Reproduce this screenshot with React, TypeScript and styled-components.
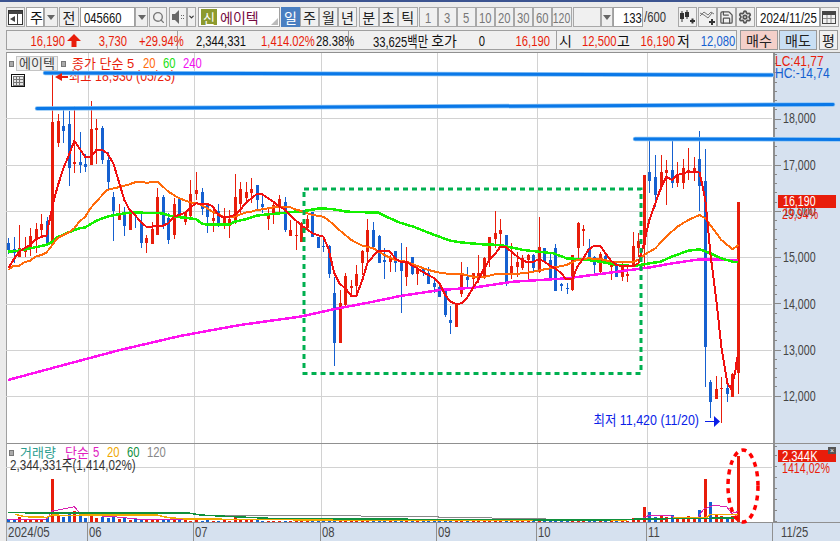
import styled, { createGlobalStyle } from 'styled-components'
import { Search, Save, Settings, ChevronDown } from 'lucide-react'

const FONT = `"Liberation Sans", "Noto Sans CJK KR", sans-serif`

const Global = createGlobalStyle`
  html, body { margin: 0; padding: 0; overflow: hidden; background: #ebebeb; }
  * { box-sizing: border-box; }
`

const Shell = styled.div`
  width: 840px;
  height: 541px;
  overflow: hidden;
  display: flex;
  flex-direction: column;
  border-top: 2px solid #3c5490;
  font-family: ${FONT};
  background: #ebebeb;
`

const Toolbar = styled.div`
  display: flex;
  height: 20px;
  margin: 5px 0 0 6px;
`

const Btn = styled.div<{ $w: number; $ml?: number; $active?: boolean; $muted?: boolean }>`
  width: ${p => p.$w}px;
  margin-left: ${p => p.$ml ?? 0}px;
  flex: none;
  display: flex;
  align-items: center;
  justify-content: center;
  font-size: 14px;
  border: 1px solid ${p => (p.$active ? '#4a7fc1' : '#a8a8a8')};
  background: ${p => (p.$active ? '#4a7fc1' : '#f0f0f0')};
  color: ${p => (p.$active ? '#fff' : p.$muted ? '#777' : '#222')};
`

const Field = styled.div<{ $w: number; $ml?: number }>`
  width: ${p => p.$w}px;
  margin-left: ${p => p.$ml ?? 0}px;
  flex: none;
  display: flex;
  align-items: center;
  padding: 0 3px;
  font-size: 14px;
  color: #111;
  background: #fff;
  border: 1px solid #a0a0a0;
`

// the reference font is a narrow bitmap face, no installed family has its widths
const Squeeze = styled.span<{ $sx?: number; $o?: string; $fs?: number }>`
  display: inline-block;
  flex: none;
  white-space: nowrap;
  font-size: ${p => p.$fs ?? 15}px;
  transform: scaleX(${p => p.$sx ?? 0.75});
  transform-origin: ${p => p.$o ?? 'left'} center;
`

const Caret = styled.div<{ $w: number }>`
  width: ${p => p.$w}px;
  flex: none;
  display: flex;
  align-items: center;
  justify-content: center;
  background: #efefef;
  border: 1px solid #a8a8a8;
  &::after {
    content: '';
    border-left: 4px solid transparent;
    border-right: 4px solid transparent;
    border-top: 5px solid #666;
  }
`

const ShinBadge = styled.span`
  width: 16px;
  height: 16px;
  margin-left: -1px;
  flex: none;
  display: flex;
  align-items: center;
  justify-content: center;
  background: #8c9a2e;
  color: #fff;
  font-size: 13px;
`

const NameText = styled.span`
  margin-left: 3px;
  font-size: 14px;
  color: #74093f;
`

const Corner = styled.span`
  margin-left: auto;
  margin-right: -2px;
  align-self: flex-end;
  margin-bottom: 1px;
  border-left: 7px solid transparent;
  border-bottom: 7px solid #bbb;
`

const Total = styled.span`
  width: 26px;
  margin-left: 1px;
  flex: none;
  align-self: center;
  color: #333;
`

const InfoBar = styled.div`
  display: flex;
  height: 20px;
  margin: 3px 0 2px 6px;
`

const Group = styled.div<{ $w: number; $first?: boolean }>`
  width: ${p => p.$w}px;
  flex: none;
  display: flex;
  align-items: center;
  background: #f0f0f0;
  border: 1px solid #a0a0a0;
  border-left-width: ${p => (p.$first ? 1 : 0)}px;
`

const Cell = styled.span<{ $w: number; $c?: string; $wide?: boolean }>`
  width: ${p => p.$w}px;
  flex: none;
  text-align: right;
  white-space: nowrap;
  font-size: ${p => (p.$wide ? 14 : 15)}px;
  color: ${p => p.$c ?? '#111'};
  transform: scaleX(${p => (p.$wide ? 1 : 0.75)});
  transform-origin: right center;
`

const UpArrow = styled.svg`
  margin-left: 2px;
  flex: none;
`

const TradeBtn = styled.div<{ $w: number; $ml: number; $bg: string }>`
  width: ${p => p.$w}px;
  margin-left: ${p => p.$ml}px;
  flex: none;
  display: flex;
  align-items: center;
  justify-content: center;
  font-size: 14px;
  color: #222;
  background: ${p => p.$bg};
  border: 1px solid #999;
`

const ChartFrame = styled.div`
  flex: 1;
  margin-left: 6px;
  display: flex;
  flex-direction: column;
  background: #fff;
  border-top: 1px solid #909090;
  border-left: 1px solid #a0a0a0;
`

const Pane = styled.div<{ $h: number }>`
  height: ${p => p.$h}px;
  flex: none;
  position: relative;
  display: flex;
  border-bottom: 1px solid #909090;
`

const Plot = styled.div`
  flex: 1;
`

const PriceAxis = styled.div`
  width: 67px;
  flex: none;
  background: #d6e1ef;
  border-left: 2px solid #909090;
`

const ChartSvg = styled.svg`
  position: absolute;
  left: -1px;
  top: 0;
  overflow: visible;
  text {
    font-family: ${FONT};
  }
`

const Label = styled.text<{ $sx?: number; $end?: boolean; $fs?: number }>`
  font-size: ${p => p.$fs ?? 15}px;
  transform-box: fill-box;
  transform-origin: ${p => (p.$end ? 'right' : 'left')} center;
  transform: scaleX(${p => p.$sx ?? 0.71});
`

const Legend = styled.div<{ $top: number }>`
  position: absolute;
  left: 2px;
  top: ${p => p.$top}px;
  display: flex;
  align-items: center;
  font-size: 13px;
  line-height: 16px;
`

const Dot = styled.span`
  width: 5px;
  height: 6px;
  flex: none;
  background: #aaa;
  border: 1px solid #777;
`

const NameChip = styled.span`
  width: 42px;
  height: 15px;
  margin: 0 3px 0 2px;
  display: flex;
  align-items: center;
  justify-content: center;
  background: #efefef;
  border: 1px solid #c4c4c4;
  color: #444;
`

const LegendText = styled.span<{ $c: string; $ml: number; $w: number }>`
  width: ${p => p.$w}px;
  margin-left: ${p => p.$ml}px;
  flex: none;
  color: ${p => p.$c};
  white-space: nowrap;
`

const VolumeInfo = styled.div`
  position: absolute;
  left: 3px;
  top: 13px;
  line-height: 16px;
  color: #333;
`

const CloseBox = styled.div`
  position: absolute;
  right: 4px;
  top: 3px;
  width: 8px;
  height: 7px;
  background: #555;
  color: #fff;
  font-size: 7px;
  line-height: 7px;
  text-align: center;
`

const TimeAxis = styled.div`
  flex: 1;
  display: flex;
  background: #d6e1ef;
`

const TimeCell = styled.div<{ $w: number }>`
  width: ${p => p.$w}px;
  flex: none;
  padding-left: 1px;
  line-height: 18px;
  color: #444;
  border-right: 1px solid #909090;
  &:last-child { border-right: none; padding-left: 8px; }
`

const R = 1
const B = 0
type Raw = [number, number, number, number, number]

// body top, body bottom, wick top, wick bottom, read off the chart at 3x
const seg1: Raw[] = [
  [B,430,450,415,462],[B,448,458,410,490],[R,445,470,375,465],[R,440,455,410,470],[R,408,440,385,468],
  [R,388,418,368,460],[R,372,390,342,415],[B,363,432,352,432],[R,65,425,-75,435],[R,63,130,42,140],
  [B,78,93,20,130],[B,72,205,33,258],[R,185,192,18,218],[B,186,195,96,218],[B,192,202,162,215],
  [R,87,195,3,195],[R,84,90,57,192],[B,84,180,78,192],[B,180,245,155,272],[B,292,332,275,422],
  [R,345,360,312,360],[B,345,378,320,408],[R,335,390,330,390],[B,345,348,335,385],[B,370,428,337,445],
  [R,413,430,405,458],[R,388,432,365,432],[R,290,405,265,405],[B,290,375,285,388],[B,353,420,340,432],
  [R,312,405,295,418],[B,295,350,292,352],[R,335,365,335,375],[R,282,348,240,360],[R,270,282,217,300],
  [B,276,327,265,345],[B,315,350,308,398],[R,354,364,325,395],[B,333,378,312,382],[R,350,375,325,388],
  [R,356,378,330,415],[R,292,362,222,372],[R,268,312,245,345],[R,276,294,245,310],[R,267,280,235,310],
  [B,255,300,255,328],[B,312,322,285,338],[R,342,356,320,390],[R,315,345,310,372],[R,297,318,285,340],
  [B,306,390,292,395],[R,390,408,360,408],[R,405,407,362,450],
]
const seg2: Raw[] = [
  [R,130,185,125,185],[R,118,145,105,150],[B,97,170,95,172],[B,172,205,172,205],[B,198,202,178,215],
  [B,197,282,195,293],[B,340,490,290,557],[R,370,488,330,488],[R,288,375,278,378],[R,319,323,300,350],
  [R,283,318,255,345],[R,213,248,210,285],[R,150,215,118,250],[B,150,202,127,205],[B,168,248,165,250],
  [B,240,245,205,297],[R,230,245,225,275],[B,213,248,212,275],[B,240,272,190,398],[R,245,290,202,318],
  [B,232,282,232,285],[R,265,282,255,315],[B,265,280,262,288],[B,278,312,262,312],[B,310,320,295,338],
  [B,320,352,318,352],[B,325,404,323,412],[B,420,428,378,462],[R,372,440,372,440],[R,278,342,245,352],
  [B,292,300,262,325],[R,280,298,280,325],[R,280,298,225,310],[R,235,295,230,298],[R,172,238,172,260],
  [R,160,178,93,205],[R,150,162,118,205],[B,165,305,165,318],[R,258,280,190,297],[R,246,262,215,290],
  [R,235,265,225,270],[R,225,240,222,297],[B,225,265,222,278],[R,202,275,112,280],[B,205,245,205,250],
  [B,240,295,222,300],[B,205,332,192,332],[B,313,318,310,332],[B,324,326,310,342],[R,225,330,225,332],
  [R,128,205,125,240],[R,148,152,135,198],[B,205,235,178,240],[B,232,255,228,285],[R,222,275,215,278],
  [B,228,250,225,252],[R,250,260,240,300],[B,252,290,250,292],[R,255,290,242,302],[R,282,287,258,305],
  [R,198,260,155,262],[R,183,205,160,230],
]
const seg3: Raw[] = [
  [R,165,375,165,440],[B,155,182,62,218],[B,170,225,105,260],[R,155,200,105,210],[R,150,158,120,255],
  [B,150,188,55,205],[R,163,188,125,200],[R,145,190,118,208],[R,150,155,85,180],[R,145,152,110,182],
  [B,117,197,33,272],[B,183,680,88,802],[B,787,845,780,894],[R,808,838,768,838],[R,803,806,770,909],
  [B,803,822,790,845],[R,762,830,760,830],[R,246,760,246,822],
]

const toPage = (oy: number) => (r: Raw): Raw => [r[0], oy + r[1] / 3, oy + r[2] / 3, oy + r[3] / 3, oy + r[4] / 3]
const candles = [...seg1.map(toPage(100)), ...seg2.map(toPage(180)), ...seg3.map(toPage(120))]

const candleX = (i: number) => 8.5 + i * 5.53
const RED = '#e81d0b'
const BLUE = '#1560d0'

const zoomed = (ox: number, oy: number, list: number[][]) =>
  list.map(([x, y]) => `${ox + x / 3},${oy + y / 3}`).join(' ')

const ma5 = [
  zoomed(0, 100, [[25,505],[40,480],[57,455],[73,445],[90,435],[106,420],[124,410],[139,408],[157,320],[172,262],[190,205],[205,170],[223,122],[238,145],[256,172],[271,172],[289,150],[307,150],[322,160],[340,190],[355,240],[373,300],[388,328],[405,345],[421,365],[439,380],[454,380],[472,378],[487,378],[505,370],[521,350],[538,345],[556,338],[571,322],[589,310],[604,312],[622,312],[637,318],[655,345],[670,352],[688,350],[704,345],[721,330],[736,310],[754,295],[769,283],[787,283],[805,295],[820,305],[838,320],[853,328],[871,345],[886,360]]),
  zoomed(300, 180, [[3,135],[37,160],[52,165],[70,170],[85,205],[103,280],[118,310],[136,325],[154,348],[169,348],[187,300],[202,250],[220,228],[235,212],[253,212],[268,213],[286,235],[301,245],[319,245],[334,255],[352,265],[367,275],[385,285],[403,295],[418,310],[436,345],[451,365],[469,372],[484,370],[502,352],[518,325],[535,300],[550,270],[568,240],[583,225],[601,200],[616,200],[634,215],[652,230],[667,240],[685,248],[700,245],[718,238],[733,245],[751,258],[766,265],[784,280],[799,298],[817,298],[832,260],[850,235],[865,210],[883,197],[901,197],[916,220],[934,243],[949,255],[967,258],[982,258],[1000,258],[1015,250]]),
  zoomed(620, 120, [[72,370],[88,300],[106,250],[122,205],[139,170],[155,180],[172,165],[190,160],[205,155],[222,155],[239,158],[256,240],[262,300],[271,400],[289,540],[304,680],[322,790],[332,805],[345,760],[352,710]]),
].join(' ')

const ma20 = [
  zoomed(0, 100, [[25,510],[40,497],[57,497],[73,487],[90,482],[106,470],[124,465],[139,458],[157,435],[172,415],[190,405],[205,398],[223,385],[238,365],[256,350],[271,325],[289,305],[307,285],[322,270],[340,265],[355,262],[373,257],[388,253],[405,247],[421,245],[439,248],[454,247],[472,245],[487,258],[505,275],[521,285],[538,295],[556,302],[571,307],[589,310],[604,315],[622,325],[637,335],[655,342],[670,350],[688,352],[704,350],[721,343],[736,338],[754,335],[769,330],[787,328],[805,325],[820,322],[838,320],[853,320],[871,322],[886,328]]),
  zoomed(300, 180, [[0,92],[37,105],[70,110],[85,120],[118,150],[154,180],[187,197],[220,205],[253,225],[286,240],[319,245],[352,258],[385,270],[418,278],[451,282],[484,282],[520,290],[550,292],[583,283],[634,283],[667,280],[700,275],[733,268],[766,262],[799,255],[832,240],[865,235],[901,237],[934,245],[967,245],[1000,245],[1020,238]]),
  zoomed(620, 120, [[72,405],[106,385],[139,350],[172,320],[205,300],[239,285],[256,295],[271,315],[304,360],[338,388],[355,375]]),
].join(' ')

const ma60 = [
  zoomed(0, 100, [[25,455],[57,452],[90,445],[124,438],[139,435],[157,425],[172,412],[205,397],[238,385],[256,382],[289,362],[322,350],[355,343],[388,338],[421,338],[487,340],[520,350],[556,353],[589,358],[604,370],[622,374],[688,374],[704,365],[736,358],[769,347],[805,343],[838,340],[886,335]]),
  zoomed(300, 180, [[0,95],[30,90],[60,85],[95,87],[140,95],[235,98],[270,115],[300,128],[340,140],[385,158],[450,182],[490,188],[550,193],[600,195],[670,210],[760,220],[800,235],[850,238],[900,245],[950,255],[1000,258]]),
  zoomed(620, 120, [[88,430],[122,425],[155,410],[205,392],[239,388],[271,400],[304,415],[338,425],[355,427]]),
].join(' ')

const ma240 = [
  '8,380 60,366 120,350 180,336 240,325',
  zoomed(300, 180, [[0,410],[100,388],[220,365],[300,348],[420,330],[520,323],[640,305],[800,295],[900,282],[1050,262]]),
  zoomed(620, 120, [[100,440],[170,428],[239,418],[355,420]]),
].join(' ')

const volumes = [
  3,3,5,3,3,3,3,5,43,7,5,9,11,6,4,8,4,5,4,6,3,4,2,4,2,2,2,2,3,2,3,
  2,2,1,2,1,2,1,1,2,1,5,3,2,2,2,1,1,1,1,1,1,1,1,1,1,1,1,2,1,4,
  2,2,1,3,1,1,1,1,1,2,1,1,2,1,1,2,1,1,1,2,1,1,1,2,1,1,2,1,1,1,2,1,1,2,1,1,1,2,1,1,2,1,1,1,1,2,1,1,1,2,1,1,4,2,
  15,10,5,6,5,7,3,4,6,4,12,43,20,7,6,4,6,66,
]
const volumeRed = [126]

const gridX = [88, 194, 321, 437, 537, 647]
const gridY = [118, 165, 211, 257, 304, 350, 396]
const priceLabels = ['18,000', '17,000', '16,000', '15,000', '14,000', '13,000', '12,000']
const priceTicks = Array.from({ length: 40 }, (_, k) => k)

const TableIcon = () => (
  <g shapeRendering="crispEdges" fill="none">
    <rect x="11.5" y="74.5" width="13" height="12" stroke="#111" />
    <rect x="13" y="76" width="10" height="9" fill="#e6e6e6" stroke="#777" />
    <path d="M16.5 76v9M19.5 76v9M13 79.5h10M13 82.5h10" stroke="#777" />
  </g>
)

const MainChart = () => (
  <ChartSvg width={834} height={390} viewBox="6 53 834 390">
    <g shapeRendering="crispEdges">
      {gridX.map(x => <line key={x} x1={x} x2={x} y1={53} y2={443} stroke="#d2d2d2" />)}
      {gridY.map(y => <line key={y} x1={6} x2={772} y1={y} y2={y} stroke="#d2d2d2" />)}
      {priceTicks.map(k => {
        const y = 396.2 - k * 9.24
        const major = k % 5 === 0
        return y > 54 && <line key={k} x1={774} x2={major ? 781 : 777} y1={y} y2={y} stroke="#888" />
      })}
      {candles.map((c, i) => (
        <g key={i} fill={c[0] ? RED : BLUE} stroke="none">
          <rect x={candleX(i) - 0.5} width={1} y={c[3]} height={c[4] - c[3]} />
          <rect x={candleX(i) - 1.5} width={3} y={c[1]} height={Math.max(c[2] - c[1], 1)} />
        </g>
      ))}
      <polyline points={ma240} fill="none" stroke="#ff12f0" strokeWidth={2.5} />
      <polyline points={ma60} fill="none" stroke="#14f000" strokeWidth={2.5} />
      <polyline points={ma20} fill="none" stroke="#ff6a0a" strokeWidth={2} />
      <polyline points={ma5} fill="none" stroke="#f01010" strokeWidth={2} />
    </g>
    <rect x={304} y={189} width={337} height={184.5} fill="none" stroke="#00b050" strokeWidth={3} strokeDasharray="5 4" />
    <Label x={69} y={81} fill={RED} $fs={14} $sx={0.88}>최고 18,930 (05/23)</Label>
    {[['45,73 772,75'], ['37,108.5 833,104.5'], ['635,139 840,139.5']].map(([pts]) => (
      <g key={pts}>
        <polyline points={pts} fill="none" stroke="#8cc4f4" strokeWidth={4.5} strokeLinecap="round" />
        <polyline points={pts} fill="none" stroke="#0a78e8" strokeWidth={3} strokeLinecap="round" />
      </g>
    ))}
    <path d="M55 77l7-4v3h6v2h-6v3z" fill={RED} />
    <TableIcon />
    <Label x={699} y={425} textAnchor="end" fill="#0a1ee8" $fs={14} $sx={0.89} $end>최저 11,420 (11/20)</Label>
    <path d="M705 421h9v-5l6 5.5-6 5.5v-5h-9z" fill="#0a1ee8" />
    {priceLabels.map((t, i) => (
      <Label key={t} x={783} y={gridY[i] + 5} fill="#444">{t}</Label>
    ))}
    <Label x={775} y={66} fill={RED} $sx={0.8}>LC:41,77</Label>
    <Label x={775} y={78} fill={BLUE} $sx={0.8}>HC:-14,74</Label>
    <rect x={778} y={195} width={58} height={13} fill={RED} />
    <Label x={783} y={206.500} fill="#fff">16,190</Label>
    <Label x={782} y={219} fill={RED}>29,94%</Label>
  </ChartSvg>
)

const VolumeChart = () => (
  <ChartSvg width={834} height={78} viewBox="6 444 834 78">
    <g shapeRendering="crispEdges">
      {gridX.map(x => <line key={x} x1={x} x2={x} y1={444} y2={522} stroke="#d2d2d2" />)}
      <line x1={6} x2={772} y1={467} y2={467} stroke="#d2d2d2" />
      {[446, 455, 466, 477, 488, 499, 510, 521].map(y => (
        <line key={y} x1={774} x2={777} y1={y} y2={y} stroke="#888" />
      ))}
      {volumes.map((h, i) => (
        <rect
          key={i}
          x={candleX(i) - 1.5}
          width={3}
          y={522 - h}
          height={h}
          fill={candles[i][0] || volumeRed.includes(i) ? RED : BLUE}
        />
      ))}
      <polyline
        points={zoomed(0, 435, [[25,255],[140,252],[157,228],[190,222],[223,215],[238,232],[256,240],[340,245],[420,253],[560,255],[1260,255]]) + ' ' + zoomed(600, 400, [[0,362],[125,356],[145,347],[210,347],[225,352],[295,352],[310,328],[340,316],[380,320],[395,340],[413,335]])}
        fill="none" stroke="#d820b0"
      />
      <polyline
        points={zoomed(0, 435, [[45,238],[75,245],[140,247],[157,240],[205,242],[256,240],[470,240],[505,248],[560,252],[1260,257]]) + ' ' + zoomed(600, 400, [[0,362],[210,355],[320,352],[330,343],[413,343]])}
        fill="none" stroke="#f0a800" strokeWidth={1.5}
      />
      <polyline
        points={zoomed(0, 435, [[25,232],[560,232],[600,240],[810,240],[1260,245]]) + ' 600,520 738,520'}
        fill="none" stroke="#888"
      />
      <polyline
        points={zoomed(0, 435, [[25,233],[210,234],[400,234],[565,234],[600,240],[700,245],[810,250],[1260,253]]) + ' 600,520 645,519 735,518'}
        fill="none" stroke="#10903c" strokeWidth={1.5}
      />
    </g>
    <ellipse cx={743} cy={486} rx={15} ry={36} fill="none" stroke="#f00" strokeWidth={3.5} strokeDasharray="5 4.5" />
    <rect x={778} y={450} width={58} height={12} fill={RED} />
    <Label x={782} y={461} fill="#fff" $sx={0.75}>2,344K</Label>
    <Label x={782} y={473} fill={RED}>1414,02%</Label>
  </ChartSvg>
)

const CandlesIcon = () => (
  <svg width="17" height="15" viewBox="0 0 17 15">
    <path d="M3 1v11M8 0v9" stroke="#333" />
    <path d="M1 3h4v6H1zM6 2h4v5H6z" fill="#333" />
    <path d="M11 10h5v2h-5zM12.5 8.5h2v5h-2z" fill="#333" />
  </svg>
)

const LinesIcon = () => (
  <svg width="17" height="15" viewBox="0 0 17 15" fill="none">
    <path d="M1 6l4-4 4 3 3-3 3 2M1 3l4 2 4 3 4-5" stroke="#777" />
    <path d="M10 11h6v2h-6zM12 9h2v6h-2z" fill="#333" />
  </svg>
)

const LayoutIcon = () => (
  <svg width="15" height="15" viewBox="0 0 15 15">
    <rect x="0.5" y="0.5" width="14" height="14" fill="#fff" stroke="#333" />
    <path d="M1 1h13v3H1zM9 4h1v10H9z" fill="#444" />
    <path d="M7 6v6L2 9z" fill="#444" />
  </svg>
)

const SpeakerIcon = () => (
  <svg width="13" height="14" viewBox="0 0 13 14">
    <path d="M0 4h3l4-4v14l-4-4H0z" fill="#666" />
    <path d="M9 5h1v1H9zM9 8h1v1H9zM11 5h1v1h-1zM11 8h1v1h-1z" fill="#666" />
  </svg>
)

const CalendarIcon = () => (
  <svg width="14" height="13" viewBox="0 0 14 13" fill="none">
    <rect x="0.5" y="0.5" width="13" height="12" stroke="#444" />
    <path d="M1 1h12v3H1z" fill="#444" />
    <path d="M5 4v8M9 4v8M1 7.5h12" stroke="#888" />
  </svg>
)

const periods = ['일', '주', '월', '년']
const units = ['분', '초', '틱']
const steps = ['1', '3', '5', '10', '20', '30', '60']

export default function App() {
  return (
    <Shell>
      <Global />
      <Toolbar>
        <Btn $w={19}><LayoutIcon /></Btn>
        <Field $w={18} $ml={1}>주</Field>
        <Caret $w={14} />
        <Btn $w={20} $ml={1}>전</Btn>
        <Field $w={55} $ml={1}><Squeeze>045660</Squeeze></Field>
        <Caret $w={13} />
        <Btn $w={18} $ml={1}><Search size={13} color="#777" strokeWidth={2.5} /></Btn>
        <Btn $w={18} $ml={2}><SpeakerIcon /></Btn>
        <Btn $w={9}><ChevronDown size={8} color="#333" strokeWidth={4} /></Btn>
        <Field $w={82} $ml={2}>
          <ShinBadge>신</ShinBadge>
          <NameText>에이텍</NameText>
          <Corner />
        </Field>
        {periods.map((t, i) => (
          <Btn key={t} $w={19} $ml={i === 0 ? 1 : 0} $active={i === 0}>{t}</Btn>
        ))}
        {units.map((t, i) => <Btn key={t} $w={19.5} $ml={i === 0 ? 2 : 0}>{t}</Btn>)}
        {steps.map((t, i) => (
          <Btn key={t} $w={19} $ml={i === 0 ? 1 : 0} $muted><Squeeze $o="center">{t}</Squeeze></Btn>
        ))}
        <Btn $w={20} $muted><Squeeze $sx={0.7} $o="center">120</Squeeze></Btn>
        <Btn $w={28} $ml={1} />
        <Caret $w={12} />
        <Field $w={30}><Cell $w={24}>133</Cell></Field>
        <Total><Squeeze>/600</Squeeze></Total>
        <Btn $w={19} $ml={8}><CandlesIcon /></Btn>
        <Btn $w={19} $ml={1}><LinesIcon /></Btn>
        <Btn $w={19}><Save size={15} color="#555" /></Btn>
        <Btn $w={19}><Settings size={14} color="#555" strokeWidth={3} /></Btn>
        <Field $w={64} $ml={1}><Squeeze $sx={0.77}>2024/11/25</Squeeze></Field>
        <Btn $w={19}><CalendarIcon /></Btn>
      </Toolbar>
      <InfoBar>
        <Group $w={172} $first>
          <Cell $w={58} $c={RED}>16,190</Cell>
          <UpArrow width="14" height="13" viewBox="0 0 14 13">
            <path d="M7 0l7 7H9.500v6h-5V7H0z" fill={RED} />
          </UpArrow>
          <Cell $w={46} $c={RED}>3,730</Cell>
          <Cell $w={48} $c={RED}>+29.94%</Cell>
        </Group>
        <Group $w={171}>
          <Cell $w={68}>2,344,331</Cell>
          <Cell $w={60} $c={RED}>1,414.02%</Cell>
          <Cell $w={40}>28.38%</Cell>
        </Group>
        <Group $w={208}>
          <Cell $w={79}>33,625백만</Cell>
          <Cell $w={29} $wide>호가</Cell>
          <Cell $w={28}>0</Cell>
          <Cell $w={65} $c={RED}>16,190</Cell>
        </Group>
        <Group $w={180}>
          <Cell $w={15} $wide>시</Cell>
          <Cell $w={40} $c={RED}>12,500</Cell>
          <Cell $w={18} $wide>고</Cell>
          <Cell $w={42} $c={RED}>16,190</Cell>
          <Cell $w={18} $wide>저</Cell>
          <Cell $w={43} $c={BLUE}>12,080</Cell>
        </Group>
        <TradeBtn $w={38} $ml={3} $bg="#f4cfc9">매수</TradeBtn>
        <TradeBtn $w={38} $ml={1} $bg="#c9dff4">매도</TradeBtn>
        <TradeBtn $w={19} $ml={2} $bg="#f0f0f0">평</TradeBtn>
      </InfoBar>
      <ChartFrame>
        <Pane $h={391}>
          <Plot />
          <PriceAxis />
          <MainChart />
          <Legend $top={2}>
            <Dot />
            <NameChip>에이텍</NameChip>
            <Dot />
            <LegendText $c={RED} $ml={6} $w={63}>종가 단순 5</LegendText>
            <LegendText $c="#ff6a0a" $ml={8} $w={12}><Squeeze>20</Squeeze></LegendText>
            <LegendText $c="#20e010" $ml={8} $w={12}><Squeeze>60</Squeeze></LegendText>
            <LegendText $c="#f010f0" $ml={8} $w={18}><Squeeze>240</Squeeze></LegendText>
          </Legend>
        </Pane>
        <Pane $h={79}>
          <Plot />
          <PriceAxis />
          <VolumeChart />
          <Legend $top={0}>
            <Dot />
            <LegendText $c="#2a9d8f" $ml={6} $w={33}>거래량</LegendText>
            <LegendText $c="#e020c0" $ml={12} $w={22}>단순</LegendText>
            <LegendText $c="#e020c0" $ml={6} $w={6}><Squeeze>5</Squeeze></LegendText>
            <LegendText $c="#f0a800" $ml={8} $w={12}><Squeeze>20</Squeeze></LegendText>
            <LegendText $c="#10903c" $ml={8} $w={12}><Squeeze>60</Squeeze></LegendText>
            <LegendText $c="#888" $ml={8} $w={18}><Squeeze>120</Squeeze></LegendText>
          </Legend>
          <VolumeInfo><Squeeze $fs={14} $sx={0.83}>2,344,331주(1,414,02%)</Squeeze></VolumeInfo>
          <CloseBox>×</CloseBox>
        </Pane>
        <TimeAxis>
          <TimeCell $w={81}><Squeeze $sx={0.77}>2024/05</Squeeze></TimeCell>
          <TimeCell $w={106}><Squeeze>06</Squeeze></TimeCell>
          <TimeCell $w={127}><Squeeze>07</Squeeze></TimeCell>
          <TimeCell $w={116}><Squeeze>08</Squeeze></TimeCell>
          <TimeCell $w={100}><Squeeze>09</Squeeze></TimeCell>
          <TimeCell $w={110}><Squeeze>10</Squeeze></TimeCell>
          <TimeCell $w={126}><Squeeze>11</Squeeze></TimeCell>
          <TimeCell $w={67}><Squeeze>11/25</Squeeze></TimeCell>
        </TimeAxis>
      </ChartFrame>
    </Shell>
  )
}
